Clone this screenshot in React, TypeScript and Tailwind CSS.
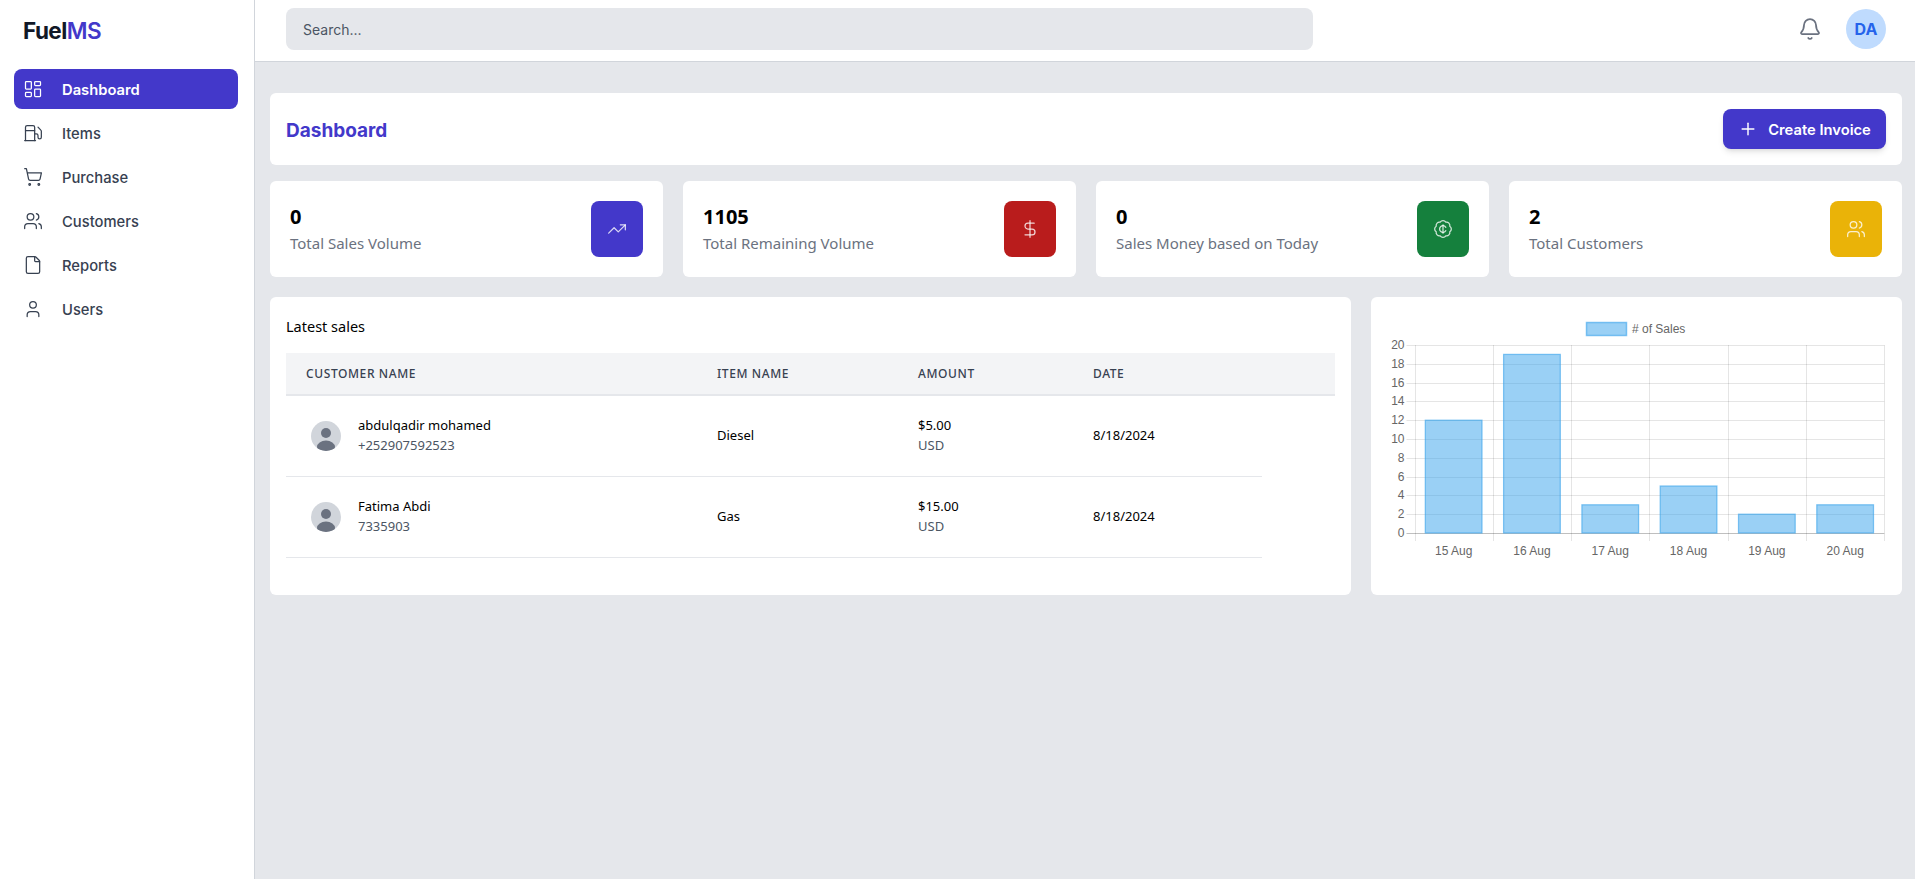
import React from 'react';
import {
  LayoutDashboard,
  Fuel,
  ShoppingCart,
  Users,
  File,
  User,
  Bell,
  Plus,
  TrendingUp,
  DollarSign,
  BadgeCent,
} from 'lucide-react';

const navItems = [
  { label: 'Dashboard', icon: LayoutDashboard, active: true },
  { label: 'Items', icon: Fuel },
  { label: 'Purchase', icon: ShoppingCart },
  { label: 'Customers', icon: Users },
  { label: 'Reports', icon: File },
  { label: 'Users', icon: User },
];

const stats = [
  { value: '0', label: 'Total Sales Volume', icon: TrendingUp, color: 'bg-[#4338ca]' },
  { value: '1105', label: 'Total Remaining Volume', icon: DollarSign, color: 'bg-[#b91c1c]' },
  { value: '0', label: 'Sales Money based on Today', icon: BadgeCent, color: 'bg-[#15803d]' },
  { value: '2', label: 'Total Customers', icon: Users, color: 'bg-[#eab308]' },
];

const sales = [
  { name: 'abdulqadir mohamed', phone: '+252907592523', item: 'Diesel', amount: '$5.00', date: '8/18/2024' },
  { name: 'Fatima Abdi', phone: '7335903', item: 'Gas', amount: '$15.00', date: '8/18/2024' },
];

const chartData = [
  { label: '15 Aug', value: 12 },
  { label: '16 Aug', value: 19 },
  { label: '17 Aug', value: 3 },
  { label: '18 Aug', value: 5 },
  { label: '19 Aug', value: 2 },
  { label: '20 Aug', value: 3 },
];

const Avatar = () => (
  <div className="w-[30px] h-[30px] rounded-full bg-[#d1d5db] overflow-hidden shrink-0">
    <svg viewBox="0 0 30 30" className="w-full h-full">
      <circle cx="15" cy="12" r="5" fill="#6b7280" />
      <ellipse cx="15" cy="26" rx="9" ry="6.5" fill="#6b7280" />
    </svg>
  </div>
);

const SalesChart = () => {
  const left = 43.5;
  const top = 48;
  const step = 78.3;
  const unit = 9.4;
  const bottom = top + 20 * unit;
  const ticks = [0, 2, 4, 6, 8, 10, 12, 14, 16, 18, 20];
  return (
    <svg viewBox="0 0 531 298" className="w-full h-full block" fontFamily="'Liberation Sans', Arial, sans-serif" fontSize="12" fill="#666">
      <rect x="215.5" y="25.5" width="40" height="13" fill="rgba(54,162,235,0.5)" stroke="rgba(54,162,235,0.6)" strokeWidth="1.5" />
      <text x="261" y="36">
        # of Sales
      </text>
      {ticks.map((t) => {
        const y = Math.round(bottom - t * unit) + 0.5;
        return (
          <g key={t}>
            <line x1={left - 8} x2={left + step * 6} y1={y} y2={y} stroke={t === 0 ? 'rgba(0,0,0,0.25)' : 'rgba(0,0,0,0.1)'} />
            <text x={left - 10} y={y + 3.5} textAnchor="end">
              {t}
            </text>
          </g>
        );
      })}
      {[0, 1, 2, 3, 4, 5, 6].map((i) => {
        const x = Math.round(left + step * i) + 0.5;
        return <line key={i} x1={x} x2={x} y1={top} y2={bottom + 8} stroke="rgba(0,0,0,0.1)" />;
      })}
      {chartData.map((d, i) => {
        const x = left + step * i + 10.8;
        const h = d.value * unit;
        return (
          <g key={d.label}>
            <rect x={x} y={bottom - h} width={56.7} height={h} fill="rgba(54,162,235,0.5)" stroke="rgba(54,162,235,0.6)" strokeWidth="1.25" />
            <text x={left + step * i + step / 2} y={bottom + 22} textAnchor="middle">
              {d.label}
            </text>
          </g>
        );
      })}
    </svg>
  );
};

export default function App() {
  return (
    <div className="flex h-screen bg-[#e5e7eb] font-['Inter',sans-serif]">
      <aside className="w-[255px] shrink-0 bg-white border-r border-[#d1d5db] pl-[14px] pr-[16px]">
        <div className="h-[61px] flex items-center pl-[9px] pt-px text-[22.5px] font-bold tracking-tight text-[#111827]">
          Fuel<span className="font-semibold text-[#4338ca]">MS</span>
        </div>
        <nav className="mt-2 flex flex-col gap-1">
          {navItems.map((item) => (
            <a
              key={item.label}
              className={`h-10 flex items-center gap-[19px] pl-[9px] rounded-lg text-[14.75px] ${
                item.active ? 'bg-[#4338ca] text-white font-semibold' : 'text-[#374151] font-medium'
              }`}
            >
              <item.icon className="w-5 h-5" strokeWidth={1.5} />
              <span className="pt-0.5">{item.label}</span>
            </a>
          ))}
        </nav>
      </aside>

      <div className="flex-1 flex flex-col min-w-0">
        <header className="h-[62px] shrink-0 bg-white border-b border-[#d1d5db] flex items-center pl-[31px] pr-[29px] pb-[3px]">
          <input
            placeholder="Search..."
            className="w-[1027px] h-[42px] rounded-lg bg-[#e5e7eb] px-[17px] text-sm placeholder:text-[#4b5563] outline-none"
          />
          <div className="ml-auto flex items-center gap-6">
            <Bell className="w-6 h-6 text-[#6b7280]" strokeWidth={1.75} />
            <div className="w-10 h-10 rounded-full bg-[#bfdbfe] text-[#2563eb] font-bold flex items-center justify-center">DA</div>
          </div>
        </header>

        <main className="flex-1 pl-[15px] pr-[13px] pt-[31px]">
          <div className="h-[72px] bg-white rounded-md flex items-center justify-between pl-4 pr-4">
            <h1 className="pt-1 text-[19px] font-bold text-[#4338ca]">Dashboard</h1>
            <button className="h-10 w-[163px] rounded-lg bg-[#4338ca] text-white text-[14.75px] font-semibold shadow-md flex items-center justify-center gap-[10px]">
              <Plus className="w-5 h-5" strokeWidth={1.75} />
              <span className="pt-0.5">Create Invoice</span>
            </button>
          </div>

          <div className="mt-4 grid grid-cols-4 gap-5">
            {stats.map((s) => (
              <div key={s.label} className="h-24 bg-white rounded-md flex items-center justify-between px-5">
                <div className="font-['Noto_Sans',sans-serif]">
                  <div className="text-xl font-bold leading-6 text-black translate-y-0.5">{s.value}</div>
                  <div className="mt-1 text-[15px] leading-6 text-[#6b7280]">{s.label}</div>
                </div>
                <div className={`w-[52px] h-14 rounded-lg ${s.color} flex items-center justify-center text-white/80`}>
                  <s.icon className="w-5 h-5" strokeWidth={1.5} />
                </div>
              </div>
            ))}
          </div>

          <div className="mt-5 flex gap-5 h-[298px]">
            <section className="w-[1081px] bg-white rounded-md px-4 pt-[19px] font-['Noto_Sans',sans-serif]">
              <h2 className="text-[14.5px] leading-5 text-black">Latest sales</h2>
              <table className="mt-[17px] w-[1049px] table-fixed text-left">
                <colgroup>
                  <col className="w-[411px]" />
                  <col className="w-[201px]" />
                  <col className="w-[175px]" />
                  <col className="w-[189px]" />
                  <col className="w-[73px]" />
                </colgroup>
                <thead>
                  <tr className="h-[42px] bg-[#f3f4f6] border-b-2 border-[#e5e7eb]">
                    {['Customer name', 'Item name', 'Amount', 'Date', ''].map((h) => (
                      <th key={h} className="px-5 text-xs font-medium uppercase tracking-wider text-[#374151]">
                        {h}
                      </th>
                    ))}
                  </tr>
                </thead>
                <tbody className="text-[13px] text-black">
                  {sales.map((s) => (
                    <tr key={s.name} className="h-[81px]">
                      <td className="pl-[25px] border-b border-[#e5e7eb]">
                        <div className="flex items-center gap-[17px]">
                          <Avatar />
                          <div className="leading-5 pb-0.5">
                            <div>{s.name}</div>
                            <div className="text-[#4b5563]">{s.phone}</div>
                          </div>
                        </div>
                      </td>
                      <td className="px-5 border-b border-[#e5e7eb]">{s.item}</td>
                      <td className="px-5 pb-0.5 leading-5 border-b border-[#e5e7eb]">
                        <div>{s.amount}</div>
                        <div className="text-[#4b5563]">USD</div>
                      </td>
                      <td className="px-5 border-b border-[#e5e7eb]">{s.date}</td>
                    </tr>
                  ))}
                </tbody>
              </table>
            </section>
            <section className="flex-1 bg-white rounded-md">
              <SalesChart />
            </section>
          </div>
        </main>
      </div>
    </div>
  );
}
